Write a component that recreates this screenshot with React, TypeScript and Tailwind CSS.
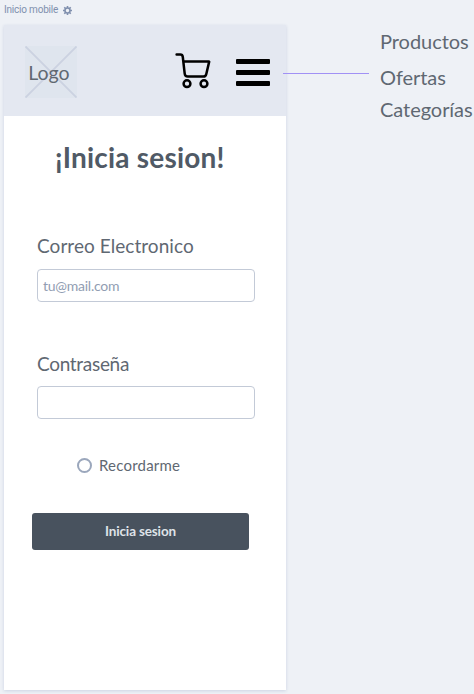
import React from "react";

function Gear() {
  return (
    <svg className="h-[9px] w-[9px]" viewBox="0 0 18 18" fill="none" stroke="#8090ae">
      <circle cx="9" cy="9" r="5" strokeWidth="3.2" />
      <path d="M9 0v4M9 14v4M0 9h4M14 9h4M2.6 2.6l2.8 2.8M12.6 12.6l2.8 2.8M2.6 15.4l2.8-2.8M12.6 5.4l2.8-2.8" strokeWidth="3.2" />
    </svg>
  );
}

function Logo() {
  return (
    <div className="relative flex h-[52px] w-[52px] items-center justify-center bg-[#dfe5ee]">
      <svg className="absolute inset-0" width="52" height="52" viewBox="0 0 52 52" stroke="#cbd2e1" strokeWidth="1.8">
        <path d="M.5.5l51 51M51.5.5l-51 51" />
      </svg>
      <span className="relative -left-[2px] top-px text-[19.5px] leading-6">Logo</span>
    </div>
  );
}

function Cart() {
  return (
    <svg width="36" height="36" viewBox="0 0 36 36" fill="none" stroke="#000" strokeWidth="2.5" strokeLinecap="round" strokeLinejoin="round">
      <path d="M1.6 1.6h3.7Q7.5 1.6 7.8 4L9.7 20.6Q10 23.6 12.8 23.6H28.2Q30.8 23.6 31.3 21L34.2 8.6H8.4" />
      <circle cx="12" cy="30.7" r="3.4" />
      <circle cx="29" cy="30.7" r="3.4" />
    </svg>
  );
}

export default function App() {
  return (
    <main className="h-[694px] w-[474px] overflow-hidden bg-[#eef1f6] font-['Lato',sans-serif] text-[#5f6872]">
      <div className="flex h-[25px] items-start gap-[5px] pl-1 pt-[4px] font-['Roboto',sans-serif] text-[10px] leading-[11px] text-[#8090ae]">
        <span className="tracking-[-0.2px]">Inicio mobile</span>
        <span className="pt-[2px]"><Gear /></span>
      </div>
      <div className="flex items-start pl-1">
        <section className="h-[665px] w-[282px] shrink-0 bg-white shadow-[0_1px_3px_rgba(130,145,185,0.3)]">
          <header className="flex h-[91px] items-start bg-[#e4e8f1] pl-[21px] pt-[21px]">
            <Logo />
            <div className="ml-[98px] mt-[7px]"><Cart /></div>
            <div className="relative ml-[25px] mt-[13px] flex w-[34px] flex-col gap-[6px]">
              <i className="h-[5px] rounded-[1px] bg-black" />
              <i className="h-[5px] rounded-[1px] bg-black" />
              <i className="h-[5px] rounded-[1px] bg-black" />
              <i className="absolute left-[47px] top-[14px] h-px w-[86px] bg-[#a191f5]" />
            </div>
          </header>
          <h1 className="mt-[23px] pl-[51px] text-[28px] font-bold leading-9 tracking-[0.2px] text-[#505a66]">¡Inicia sesion!</h1>
          <form className="flex flex-col pl-[33px]">
            <label className="mt-[59px] text-[19px] leading-6 tracking-[0.05px]">Correo Electronico</label>
            <div className="mt-[11px] flex h-[33px] w-[218px] items-center rounded-[4px] border border-[#c3cad7] pb-px pl-[5px] text-[14px] tracking-[-0.25px] text-[#919db2]">tu@mail.com</div>
            <label className="mt-[50px] text-[19px] leading-6 tracking-[-0.3px]">Contraseña</label>
            <div className="mt-[10px] h-[33px] w-[218px] rounded-[4px] border border-[#c3cad7]" />
            <div className="mt-[36px] flex items-center gap-[7px] pl-10 text-[15px] leading-5">
              <i className="h-[15px] w-[15px] rounded-full border-2 border-[#9ba7bc]" />
              <span className="tracking-[0.2px]">Recordarme</span>
            </div>
            <div className="-ml-[5px] mt-[38px] flex h-[37px] w-[217px] items-center justify-center rounded-[3px] bg-[#48525e] pb-px text-[13.5px] font-bold tracking-[-0.15px] text-[#dfe3e8]">Inicia sesion</div>
          </form>
        </section>
        <nav className="ml-[94px] flex flex-col pt-[4px] text-[20px] leading-6 tracking-[-0.05px]">
          <span>Productos</span>
          <span className="mt-[12px]">Ofertas</span>
          <span className="mt-[8px]">Categorías</span>
        </nav>
      </div>
    </main>
  );
}
